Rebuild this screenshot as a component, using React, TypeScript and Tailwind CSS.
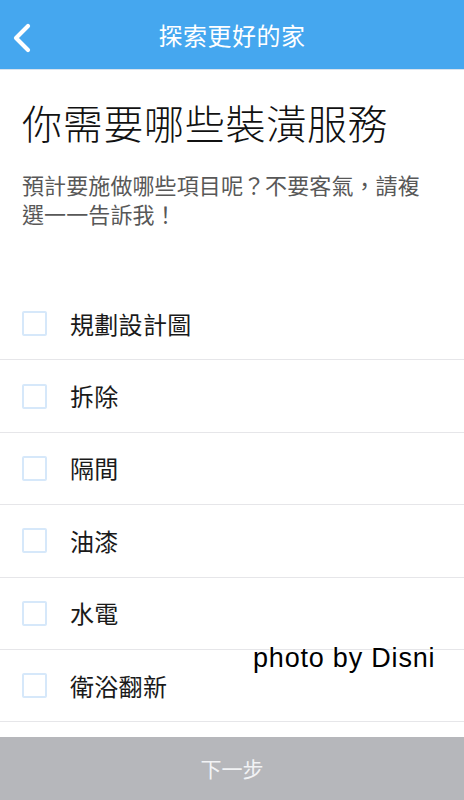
const ITEMS = ["規劃設計圖", "拆除", "隔間", "油漆", "水電", "衛浴翻新"];

const CJK = "font-['Noto_Sans_CJK_TC','Noto_Sans_CJK_SC',sans-serif]";

export default function App() {
  return (
    <div className={`relative flex h-[800px] w-[464px] flex-col overflow-hidden bg-white ${CJK}`}>
      <header className="relative flex h-[70px] shrink-0 items-center justify-center border-b border-[#d7e3ee] bg-[#45a7ef]">
        <button type="button" aria-label="返回" className="absolute left-[10px] top-[22px]">
          <svg width="24" height="32" viewBox="0 0 24 32" fill="none">
            <path d="M18 4 L6 16 L18 28" stroke="white" strokeWidth="4.2" strokeLinecap="round" strokeLinejoin="round" />
          </svg>
        </button>
        <h1 className="text-[24px] leading-none tracking-[0.5px] text-white">探索更好的家</h1>
      </header>

      <main className="flex flex-1 flex-col">
        <h2 className="mt-[28px] px-[22px] text-[40px] font-light leading-[48px] tracking-[0.7px] text-[#111]">
          你需要哪些裝潢服務
        </h2>
        <p className="mt-[24px] pl-[22px] pr-[30px] text-[22px] leading-[29px] tracking-[0.1px] text-[#585858]">
          預計要施做哪些項目呢？不要客氣，請複選一一告訴我！
        </p>

        <ul className="mt-[60px]">
          {ITEMS.map((item) => (
            <li key={item} className="flex h-[72.4px] items-center border-b border-[#e6e6e9]">
              <span className="ml-[22px] h-[25px] w-[25px] rounded-[2px] border-2 border-[#d6e8fa]" />
              <span className="ml-[23px] text-[24px] leading-none tracking-[0.3px] text-[#1a1a1a]">{item}</span>
            </li>
          ))}
        </ul>
      </main>

      <button type="button" className="flex h-[63px] shrink-0 items-center justify-center bg-[#b6b7bb] text-[21px] text-[#f2f3f5]">
        下一步
      </button>

      <div className="pointer-events-none absolute left-[253px] top-[638px] font-['Liberation_Sans',sans-serif] text-[27px] tracking-[0.8px] text-black [text-shadow:1px_1px_0_#fff,-1px_0_0_#fff]">
        photo by Disni
      </div>
    </div>
  );
}
